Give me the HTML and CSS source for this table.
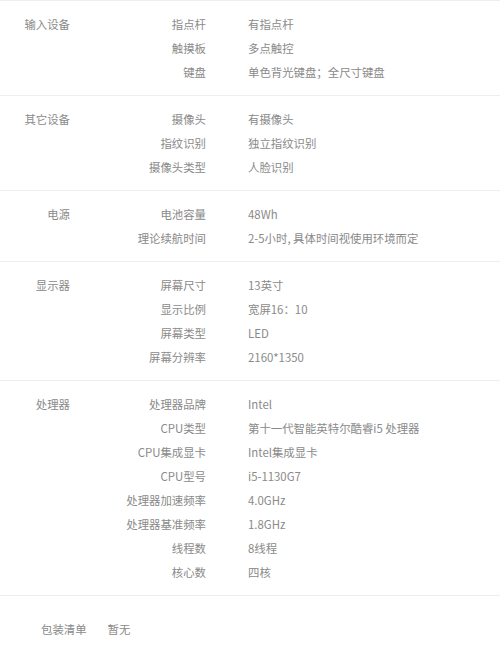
FILE: index.html
```html
<!DOCTYPE html>
<html lang="zh-CN">
<head>
  <meta charset="UTF-8">
  <meta name="viewport" content="width=device-width, initial-scale=1.0">
  <title>参数</title>
  <link rel="stylesheet" href="styles.css">
</head>
<body>
  <section class="specs">
    <div class="group">
      <div class="group-name">输入设备</div>
      <dl class="items">
        <dt>指点杆</dt><dd>有指点杆</dd>
        <dt>触摸板</dt><dd>多点触控</dd>
        <dt>键盘</dt><dd>单色背光键盘；全尺寸键盘</dd>
      </dl>
    </div>

    <div class="group">
      <div class="group-name">其它设备</div>
      <dl class="items">
        <dt>摄像头</dt><dd>有摄像头</dd>
        <dt>指纹识别</dt><dd>独立指纹识别</dd>
        <dt>摄像头类型</dt><dd>人脸识别</dd>
      </dl>
    </div>

    <div class="group">
      <div class="group-name">电源</div>
      <dl class="items">
        <dt>电池容量</dt><dd>48Wh</dd>
        <dt>理论续航时间</dt><dd>2-5小时, 具体时间视使用环境而定</dd>
      </dl>
    </div>

    <div class="group">
      <div class="group-name">显示器</div>
      <dl class="items">
        <dt>屏幕尺寸</dt><dd>13英寸</dd>
        <dt>显示比例</dt><dd>宽屏16：10</dd>
        <dt>屏幕类型</dt><dd>LED</dd>
        <dt>屏幕分辨率</dt><dd>2160*1350</dd>
      </dl>
    </div>

    <div class="group">
      <div class="group-name">处理器</div>
      <dl class="items">
        <dt>处理器品牌</dt><dd>Intel</dd>
        <dt>CPU类型</dt><dd>第十一代智能英特尔酷睿i5 处理器</dd>
        <dt>CPU集成显卡</dt><dd>Intel集成显卡</dd>
        <dt>CPU型号</dt><dd>i5-1130G7</dd>
        <dt>处理器加速频率</dt><dd>4.0GHz</dd>
        <dt>处理器基准频率</dt><dd>1.8GHz</dd>
        <dt>线程数</dt><dd>8线程</dd>
        <dt>核心数</dt><dd>四核</dd>
      </dl>
    </div>
  </section>

  <footer class="package">
    <span class="package-name">包装清单</span>
    <span>暂无</span>
  </footer>
</body>
</html>
```

FILE: styles.css
```css
* {
  margin: 0;
  padding: 0;
  box-sizing: border-box;
}

body {
  font-family: "Noto Sans CJK SC", "Microsoft YaHei", sans-serif;
  font-size: 11.4px;
  color: #8a8a8a;
  background-color: #fff;
}

/* Spec groups */
.group {
  display: flex;
  padding: 11px 0;
  border-top: 1px solid #eee;
  line-height: 24px;
}

.group-name {
  width: 70px;
  text-align: right;
}

.items {
  display: grid;
  grid-template-columns: 136px auto;
  column-gap: 42px;
}

.items dt {
  text-align: right;
}

/* Package list */
.package {
  display: flex;
  gap: 21px;
  padding: 21px 0 0 41px;
  border-top: 1px solid #eee;
  line-height: 24px;
}
```
